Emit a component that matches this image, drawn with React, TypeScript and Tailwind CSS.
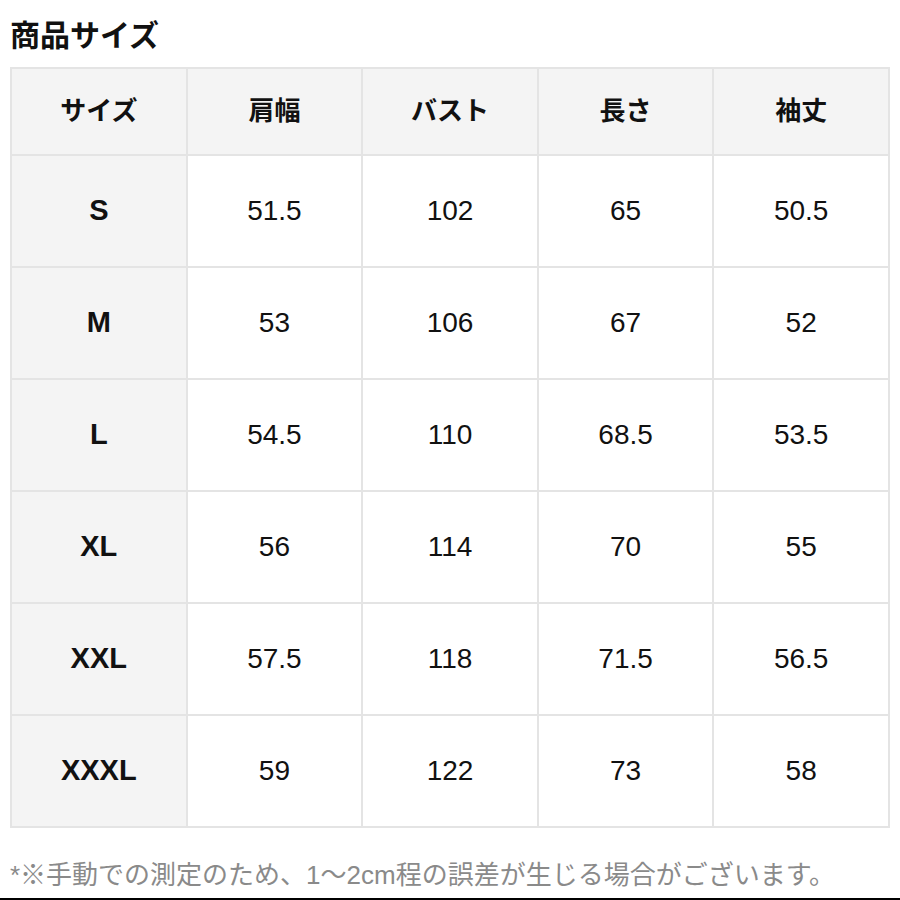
const headers = ["サイズ", "肩幅", "バスト", "長さ", "袖丈"]

const rows = [
  ["S", "51.5", "102", "65", "50.5"],
  ["M", "53", "106", "67", "52"],
  ["L", "54.5", "110", "68.5", "53.5"],
  ["XL", "56", "114", "70", "55"],
  ["XXL", "57.5", "118", "71.5", "56.5"],
  ["XXXL", "59", "122", "73", "58"],
]

export default function App() {
  return (
    <div
      className="w-[900px] h-[900px] bg-white border-b-2 border-black px-[10px] pt-[16px]"
      style={{ fontFamily: '"Liberation Sans", "Noto Sans CJK JP", sans-serif' }}
    >
      <h1 className="text-[30px] font-bold text-[#111] leading-[40px] mb-[11px]">商品サイズ</h1>

      <table className="border-collapse w-[880px] table-fixed">
        <thead>
          <tr className="h-[87px] bg-[#f4f4f4]">
            {headers.map((h) => (
              <th key={h} className="border-2 border-[#e4e4e4] text-[26px] font-bold text-[#111] text-center">
                {h}
              </th>
            ))}
          </tr>
        </thead>
        <tbody>
          {rows.map((row) => (
            <tr key={row[0]} className="h-[112px]">
              {row.map((cell, i) =>
                i === 0 ? (
                  <td key={i} className="border-2 border-[#e4e4e4] bg-[#f4f4f4] text-[29px] font-bold text-[#111] text-center">
                    {cell}
                  </td>
                ) : (
                  <td key={i} className="border-2 border-[#e4e4e4] bg-white text-[28px] text-[#111] text-center">
                    {cell}
                  </td>
                )
              )}
            </tr>
          ))}
        </tbody>
      </table>

      <p className="mt-[30px] text-[26px] text-[#8a8a8a] leading-[34px]">
        *※手動での測定のため、1〜2cm程の誤差が生じる場合がございます。
      </p>
    </div>
  )
}
